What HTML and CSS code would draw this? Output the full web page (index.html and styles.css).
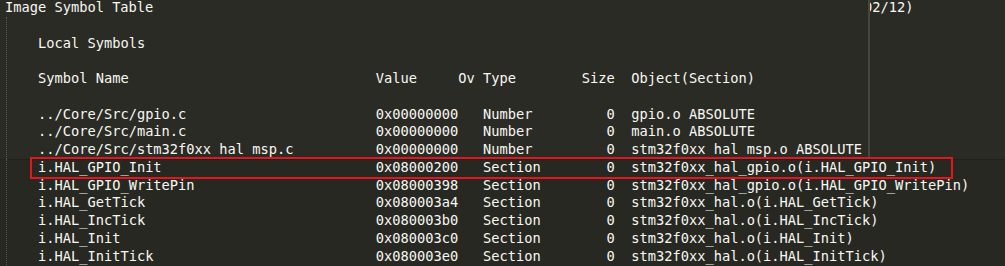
FILE: index.html
```html
<!DOCTYPE html>
<html lang="en">
<head>
    <meta charset="UTF-8">
    <title>Image Symbol Table</title>
    <link rel="stylesheet" href="styles.css">
</head>
<body>
    <div class="editor">
        <div class="band">
            <div class="pane-main">
                <div class="line title">Image Symbol Table</div>
                <div class="guide">
                    <div class="line"></div>
                    <div class="line">Local Symbols</div>
                    <div class="line"></div>
                    <div class="row">
                        <span>Symbol Name</span><span>Value</span><span>Ov</span><span>Type</span><span class="size">Size</span><span></span><span>Object(Section)</span>
                    </div>
                    <div class="line"></div>
                    <div class="row">
                        <span>../Core/Src/gpio.c</span><span>0x00000000</span><span></span><span>Number</span><span class="size">0</span><span></span><span>gpio.o ABSOLUTE</span>
                    </div>
                    <div class="row">
                        <span>../Core/Src/main.c</span><span>0x00000000</span><span></span><span>Number</span><span class="size">0</span><span></span><span>main.o ABSOLUTE</span>
                    </div>
                    <div class="row">
                        <span>../Core/Src/stm32f0xx hal msp.c</span><span>0x00000000</span><span></span><span>Number</span><span class="size">0</span><span></span><span>stm32f0xx hal msp.o ABSOLUTE</span>
                    </div>
                </div>
            </div>
            <div class="pane-side">
                <div class="line">02/12)</div>
            </div>
        </div>
        <div class="guide">
            <div class="row hl">
                <span>i.HAL_GPIO_Init</span><span>0x08000200</span><span></span><span>Section</span><span class="size">0</span><span></span><span>stm32f0xx_hal_gpio.o(i.HAL_GPIO_Init)</span>
            </div>
            <div class="row">
                <span>i.HAL_GPIO_WritePin</span><span>0x08000398</span><span></span><span>Section</span><span class="size">0</span><span></span><span>stm32f0xx_hal_gpio.o(i.HAL_GPIO_WritePin)</span>
            </div>
            <div class="row">
                <span>i.HAL_GetTick</span><span>0x080003a4</span><span></span><span>Section</span><span class="size">0</span><span></span><span>stm32f0xx_hal.o(i.HAL_GetTick)</span>
            </div>
            <div class="row">
                <span>i.HAL_IncTick</span><span>0x080003b0</span><span></span><span>Section</span><span class="size">0</span><span></span><span>stm32f0xx_hal.o(i.HAL_IncTick)</span>
            </div>
            <div class="row">
                <span>i.HAL_Init</span><span>0x080003c0</span><span></span><span>Section</span><span class="size">0</span><span></span><span>stm32f0xx_hal.o(i.HAL_Init)</span>
            </div>
            <div class="row">
                <span>i.HAL_InitTick</span><span>0x080003e0</span><span></span><span>Section</span><span class="size">0</span><span></span><span>stm32f0xx_hal.o(i.HAL_InitTick)</span>
            </div>
        </div>
    </div>
</body>
</html>
```

FILE: styles.css
```css
html, body {
    margin: 0;
    height: 100%;
    background-color: #272822;
    overflow: hidden;
}
.editor {
    font-family: "DejaVu Sans Mono", monospace;
    font-size: 13.7px;
    line-height: 17.75px;
    color: #f8f8f2;
    margin-top: -1px;
    white-space: nowrap;
}
.band {
    display: flex;
    background-color: #2b2b26;
    box-shadow: 0 1px 0 #21221d;
}
.pane-main {
    width: 868px;
    overflow: hidden;
}
.pane-side {
    flex: 1;
    border-left: 2px solid #45463f;
    overflow: hidden;
    text-indent: -6px;
}
.line {
    height: 17.75px;
}
.title {
    padding-left: 5px;
}
.guide {
    margin-left: 6px;
    border-left: 1px dotted #58584f;
    padding-left: 31px;
}
.row {
    display: grid;
    grid-template-columns: 41ch 10ch 3ch 12ch 4ch 2ch auto;
    height: 17.75px;
}
.row .size {
    text-align: right;
}
.row.hl {
    margin-left: -6px;
    padding-left: 6px;
    width: 919px;
    box-sizing: border-box;
    outline: 2px solid #e3161e;
}
```
